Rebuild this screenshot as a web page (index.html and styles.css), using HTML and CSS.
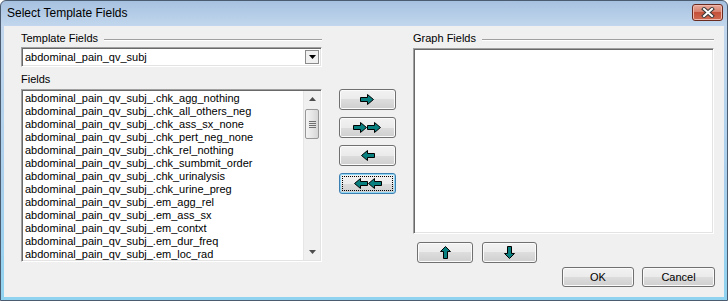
FILE: index.html
```html
<!DOCTYPE html>
<html lang="en">
<head>
  <meta charset="UTF-8" />
  <title>Select Template Fields</title>
  <link rel="stylesheet" href="styles.css">
</head>
<body>
  <div class="window">
    <div class="titlebar">
      <span class="title">Select Template Fields</span>
      <button class="close">
        <svg width="14" height="11" viewBox="0 0 14 11">
          <path d="M3 2 L11 9 M11 2 L3 9" stroke="#3a3a3a" stroke-width="4" stroke-linecap="square" fill="none"/>
          <path d="M3 2 L11 9 M11 2 L3 9" stroke="#fff" stroke-width="2" stroke-linecap="square" fill="none"/>
        </svg>
      </button>
    </div>

    <div class="client">
      <div class="col left">
        <div class="group">Template Fields</div>
        <div class="combo">
          <span class="combo-text">abdominal_pain_qv_subj</span>
          <span class="drop">
            <svg width="7" height="4" viewBox="0 0 7 4"><path d="M0 0 H7 L3.5 4 Z" fill="#000"/></svg>
          </span>
        </div>
        <div class="label">Fields</div>
        <div class="listbox fields">
          <ul class="items">
            <li>abdominal_pain_qv_subj_.chk_agg_nothing</li>
            <li>abdominal_pain_qv_subj_.chk_all_others_neg</li>
            <li>abdominal_pain_qv_subj_.chk_ass_sx_none</li>
            <li>abdominal_pain_qv_subj_.chk_pert_neg_none</li>
            <li>abdominal_pain_qv_subj_.chk_rel_nothing</li>
            <li>abdominal_pain_qv_subj_.chk_sumbmit_order</li>
            <li>abdominal_pain_qv_subj_.chk_urinalysis</li>
            <li>abdominal_pain_qv_subj_.chk_urine_preg</li>
            <li>abdominal_pain_qv_subj_.em_agg_rel</li>
            <li>abdominal_pain_qv_subj_.em_ass_sx</li>
            <li>abdominal_pain_qv_subj_.em_contxt</li>
            <li>abdominal_pain_qv_subj_.em_dur_freq</li>
            <li>abdominal_pain_qv_subj_.em_loc_rad</li>
          </ul>
          <div class="scrollbar">
            <div class="sb-arrow">
              <svg width="7" height="4" viewBox="0 0 7 4"><path d="M0 4 H7 L3.5 0 Z" fill="#4d4d4d"/></svg>
            </div>
            <div class="sb-track">
              <div class="sb-thumb">
                <svg width="7" height="7" viewBox="0 0 7 7">
                  <path d="M0 0.5 H7 M0 2.5 H7 M0 4.5 H7 M0 6.5 H7" stroke="#6f6f6f" stroke-width="1"/>
                </svg>
              </div>
            </div>
            <div class="sb-arrow">
              <svg width="7" height="4" viewBox="0 0 7 4"><path d="M0 0 H7 L3.5 4 Z" fill="#4d4d4d"/></svg>
            </div>
          </div>
        </div>
      </div>

      <div class="col mid">
        <button class="btn move">
          <svg width="15" height="11" viewBox="0 0 15 11"><path class="arrow" d="M0.5 3.5 H7.5 V0.5 L13.5 5.5 L7.5 10.5 V7.5 H0.5 Z"/></svg>
        </button>
        <button class="btn move">
          <svg width="29" height="11" viewBox="0 0 29 11">
            <path class="arrow" d="M0.5 3.5 H7.5 V0.5 L13.5 5.5 L7.5 10.5 V7.5 H0.5 Z"/>
            <path class="arrow" d="M14.5 3.5 H21.5 V0.5 L27.5 5.5 L21.5 10.5 V7.5 H14.5 Z"/>
          </svg>
        </button>
        <button class="btn move">
          <svg width="15" height="11" viewBox="0 0 15 11"><path class="arrow" d="M14.5 3.5 H7.5 V0.5 L1.5 5.5 L7.5 10.5 V7.5 H14.5 Z"/></svg>
        </button>
        <button class="btn move focused">
          <svg width="29" height="11" viewBox="0 0 29 11">
            <path class="arrow" d="M14.5 3.5 H7.5 V0.5 L1.5 5.5 L7.5 10.5 V7.5 H14.5 Z"/>
            <path class="arrow" d="M28.5 3.5 H21.5 V0.5 L15.5 5.5 L21.5 10.5 V7.5 H28.5 Z"/>
          </svg>
        </button>
      </div>

      <div class="col right">
        <div class="group">Graph Fields</div>
        <div class="listbox graph"></div>
        <div class="order-row">
          <button class="btn order up">
            <svg width="11" height="13" viewBox="0 0 11 13"><path class="arrow" d="M5.5 0.5 L10.5 5.5 H7.5 V12.5 H3.5 V5.5 H0.5 Z"/></svg>
          </button>
          <button class="btn order down">
            <svg width="11" height="13" viewBox="0 0 11 13"><path class="arrow" d="M5.5 12.5 L10.5 7.5 H7.5 V0.5 H3.5 V7.5 H0.5 Z"/></svg>
          </button>
        </div>
        <div class="dialog-row">
          <button class="btn ok">OK</button>
          <button class="btn cancel">Cancel</button>
        </div>
      </div>
    </div>
  </div>
</body>
</html>
```

FILE: styles.css
```css
body {
  margin: 0;
  font-family: "Liberation Sans", Arial, sans-serif;
  font-size: 11px;
  color: #000;
  background: #fff;
}
.window {
  width: 728px;
  height: 301px;
  box-sizing: border-box;
  border: 1px solid #4b5b70;
  border-radius: 6px 6px 0 0;
  padding: 0 3px 3px;
  background: linear-gradient(#a6c1e0 0, #c2d7ed 25px, #aacfec 60%, #8fd3f0 100%);
  display: flex;
  flex-direction: column;
}
.titlebar {
  height: 25px;
  display: flex;
  align-items: flex-start;
  padding-left: 3px;
}
.title {
  font-size: 12px;
  line-height: 25px;
}
.close {
  margin-left: auto;
  margin-top: 3px;
  margin-right: 1px;
  width: 31px;
  height: 17px;
  padding: 0;
  border: 1px solid #6b2a20;
  border-radius: 3px;
  background: linear-gradient(#e9aa9c, #d7816f 45%, #c5513a 50%, #d06a52);
  box-shadow: inset 0 0 0 1px #f0b9ad;
  display: flex;
  align-items: center;
  justify-content: center;
}
.client {
  flex: 1;
  background: #f0f0f0;
  display: flex;
  padding: 6px 10px 0 17px;
}
.col {
  display: flex;
  flex-direction: column;
}
.left {
  width: 301px;
}
.mid {
  width: 57px;
  margin-left: 17px;
  padding-top: 57px;
  gap: 7px;
}
.right {
  width: 301px;
  margin-left: 17px;
}
.group {
  height: 13px;
  line-height: 13px;
  display: flex;
  align-items: center;
  gap: 6px;
}
.group::after {
  content: "";
  flex: 1;
  margin-top: 2px;
  border-top: 1px solid #a0a0a0;
  border-bottom: 1px solid #fff;
}
.label {
  height: 13px;
  line-height: 13px;
  margin-top: 6px;
}
.combo,
.listbox {
  box-sizing: border-box;
  background: #fff;
  border: 1px solid;
  border-color: #a0a0a0 #fff #fff #a0a0a0;
  box-shadow: inset 1px 1px 0 #696969, inset -1px -1px 0 #e3e3e3;
}
.combo {
  height: 20px;
  margin-top: 2px;
  display: flex;
  align-items: center;
  padding: 1px 2px 1px 3px;
}
.combo-text {
  flex: 1;
}
.drop {
  width: 14px;
  height: 14px;
  box-sizing: border-box;
  border: 1px solid #8a8a8a;
  background: #f0f0f0;
  display: flex;
  align-items: center;
  justify-content: center;
}
.listbox.fields {
  height: 173px;
  margin-top: 3px;
  display: flex;
  padding: 1px 1px 1px 1px;
}
.items {
  list-style: none;
  margin: 0;
  padding: 1px 0 0 2px;
  flex: 1;
  overflow: hidden;
}
.items li {
  height: 13px;
  line-height: 13px;
  white-space: nowrap;
}
.scrollbar {
  width: 16px;
  display: flex;
  flex-direction: column;
  background: #f0f0f0;
  border-left: 1px solid #e6e6e6;
}
.sb-arrow {
  height: 16px;
  display: flex;
  align-items: center;
  justify-content: center;
}
.sb-track {
  flex: 1;
  padding-top: 2px;
}
.sb-thumb {
  height: 30px;
  margin: 0 1px;
  box-sizing: border-box;
  border: 1px solid #979797;
  border-radius: 2px;
  background: linear-gradient(90deg, #f4f4f4, #e6e6e6 50%, #d6d6d6);
  display: flex;
  align-items: center;
  justify-content: center;
}
.listbox.graph {
  height: 186px;
  margin-top: 3px;
}
.btn {
  box-sizing: border-box;
  height: 21px;
  padding: 0;
  border: 1px solid #707070;
  border-radius: 3px;
  background: linear-gradient(#f2f2f2 0%, #ebebeb 50%, #dddddd 50%, #cfcfcf 100%);
  box-shadow: inset 0 0 0 1px #fbfbfb;
  font-family: "Liberation Sans", Arial, sans-serif;
  font-size: 11px;
  color: #000;
  display: flex;
  align-items: center;
  justify-content: center;
}
.btn.move {
  width: 57px;
}
.btn.focused {
  border-color: #3c7fb1;
  box-shadow: inset 0 0 0 1px #8fd6f7;
  outline: 1px dotted #000;
  outline-offset: -4px;
}
.arrow {
  fill: #07807f;
  stroke: #000;
  stroke-width: 1;
}
.order-row {
  display: flex;
  gap: 9px;
  margin-top: 8px;
  padding-left: 4px;
}
.btn.up {
  width: 56px;
}
.btn.down {
  width: 55px;
}
.dialog-row {
  display: flex;
  justify-content: flex-end;
  gap: 8px;
  margin-top: 4px;
  margin-right: -1px;
}
.btn.ok {
  width: 72px;
  height: 20px;
}
.btn.cancel {
  width: 73px;
  height: 20px;
}
```
